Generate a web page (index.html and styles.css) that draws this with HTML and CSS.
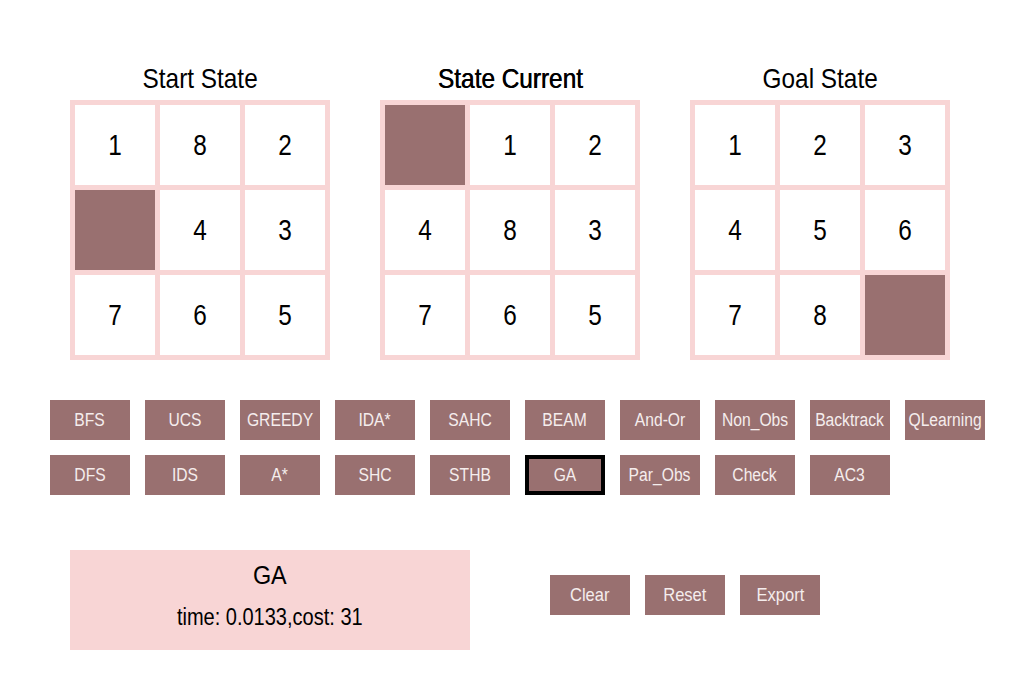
FILE: index.html
```html
<!DOCTYPE html>
<html>
<head>
<meta charset="utf-8">
<link rel="stylesheet" href="styles.css">
</head>
<body>
<div class="app">
  <div class="boards">
    <div class="panel">
      <div class="title"><span class="t">Start State</span></div>
      <div class="board">
        <div class="cell"><span class="t">1</span></div><div class="cell"><span class="t">8</span></div><div class="cell"><span class="t">2</span></div>
        <div class="cell empty"></div><div class="cell"><span class="t">4</span></div><div class="cell"><span class="t">3</span></div>
        <div class="cell"><span class="t">7</span></div><div class="cell"><span class="t">6</span></div><div class="cell"><span class="t">5</span></div>
      </div>
    </div>
    <div class="panel">
      <div class="title bold"><span class="t">State Current</span></div>
      <div class="board">
        <div class="cell empty"></div><div class="cell"><span class="t">1</span></div><div class="cell"><span class="t">2</span></div>
        <div class="cell"><span class="t">4</span></div><div class="cell"><span class="t">8</span></div><div class="cell"><span class="t">3</span></div>
        <div class="cell"><span class="t">7</span></div><div class="cell"><span class="t">6</span></div><div class="cell"><span class="t">5</span></div>
      </div>
    </div>
    <div class="panel">
      <div class="title"><span class="t">Goal State</span></div>
      <div class="board">
        <div class="cell"><span class="t">1</span></div><div class="cell"><span class="t">2</span></div><div class="cell"><span class="t">3</span></div>
        <div class="cell"><span class="t">4</span></div><div class="cell"><span class="t">5</span></div><div class="cell"><span class="t">6</span></div>
        <div class="cell"><span class="t">7</span></div><div class="cell"><span class="t">8</span></div><div class="cell empty"></div>
      </div>
    </div>
  </div>

  <div class="algos">
    <button class="btn"><span class="t">BFS</span></button>
    <button class="btn"><span class="t">UCS</span></button>
    <button class="btn"><span class="t">GREEDY</span></button>
    <button class="btn"><span class="t">IDA*</span></button>
    <button class="btn"><span class="t">SAHC</span></button>
    <button class="btn"><span class="t">BEAM</span></button>
    <button class="btn"><span class="t">And-Or</span></button>
    <button class="btn"><span class="t">Non_Obs</span></button>
    <button class="btn"><span class="t">Backtrack</span></button>
    <button class="btn"><span class="t">QLearning</span></button>
    <button class="btn"><span class="t">DFS</span></button>
    <button class="btn"><span class="t">IDS</span></button>
    <button class="btn"><span class="t">A*</span></button>
    <button class="btn"><span class="t">SHC</span></button>
    <button class="btn"><span class="t">STHB</span></button>
    <button class="btn selected"><span class="t">GA</span></button>
    <button class="btn"><span class="t">Par_Obs</span></button>
    <button class="btn"><span class="t">Check</span></button>
    <button class="btn"><span class="t">AC3</span></button>
  </div>

  <div class="bottom">
    <div class="result">
      <div class="result-name"><span class="t">GA</span></div>
      <div class="result-info"><span class="t">time: 0.0133,cost: 31</span></div>
    </div>
    <div class="actions">
      <button class="btn action"><span class="t">Clear</span></button>
      <button class="btn action"><span class="t">Reset</span></button>
      <button class="btn action"><span class="t">Export</span></button>
    </div>
  </div>
</div>
</body>
</html>
```
FILE: styles.css
```css
* { box-sizing: border-box; }
html, body { margin: 0; padding: 0; background: #ffffff; }
body {
  width: 1020px;
  height: 700px;
  overflow: hidden;
  font-family: "Liberation Sans", Arial, sans-serif;
  color: #000;
}
.t {
  display: inline-block;
  white-space: nowrap;
  transform: scaleX(0.87);
  transform-origin: center;
}
.app { padding-top: 60px; }
.boards {
  display: flex;
  gap: 50px;
  padding-left: 70px;
}
.panel { width: 260px; display: flex; flex-direction: column; }
.title {
  height: 40px;
  line-height: 38px;
  text-align: center;
  font-size: 28px;
}
.title.bold { text-shadow: 0.6px 0 0 #000; }
.board {
  width: 260px;
  height: 260px;
  background: #f8d5d5;
  padding: 5px;
  display: grid;
  grid-template-columns: repeat(3, 80px);
  grid-template-rows: repeat(3, 80px);
  gap: 5px;
}
.cell {
  background: #ffffff;
  display: flex;
  align-items: center;
  justify-content: center;
  font-size: 29px;
}
.cell .t { transform: scaleX(0.84); }
.cell.empty { background: #997070; }

.algos {
  margin-top: 40px;
  padding-left: 50px;
  display: grid;
  grid-template-columns: repeat(10, 80px);
  grid-auto-rows: 40px;
  column-gap: 15px;
  row-gap: 15px;
}
.btn {
  width: 80px;
  height: 40px;
  border: none;
  margin: 0;
  padding: 0;
  background: #997070;
  color: #f5eded;
  font-family: "Liberation Sans", Arial, sans-serif;
  font-size: 18px;
  display: flex;
  align-items: center;
  justify-content: center;
  white-space: nowrap;
  overflow: visible;
}
.btn.selected { border: 4px solid #000; }

.bottom {
  margin-top: 55px;
  padding-left: 70px;
  display: flex;
  align-items: flex-start;
}
.result {
  width: 400px;
  height: 100px;
  background: #f8d5d5;
  display: flex;
  flex-direction: column;
  align-items: center;
  padding-top: 10px;
}
.result-name { font-size: 26px; line-height: 30px; }
.result-name .t { transform: scaleX(0.9); }
.result-info { font-size: 23px; line-height: 26px; margin-top: 14px; }
.actions {
  margin-top: 25px;
  margin-left: 80px;
  display: flex;
  gap: 15px;
}
.btn.action { font-size: 19px; }
```
